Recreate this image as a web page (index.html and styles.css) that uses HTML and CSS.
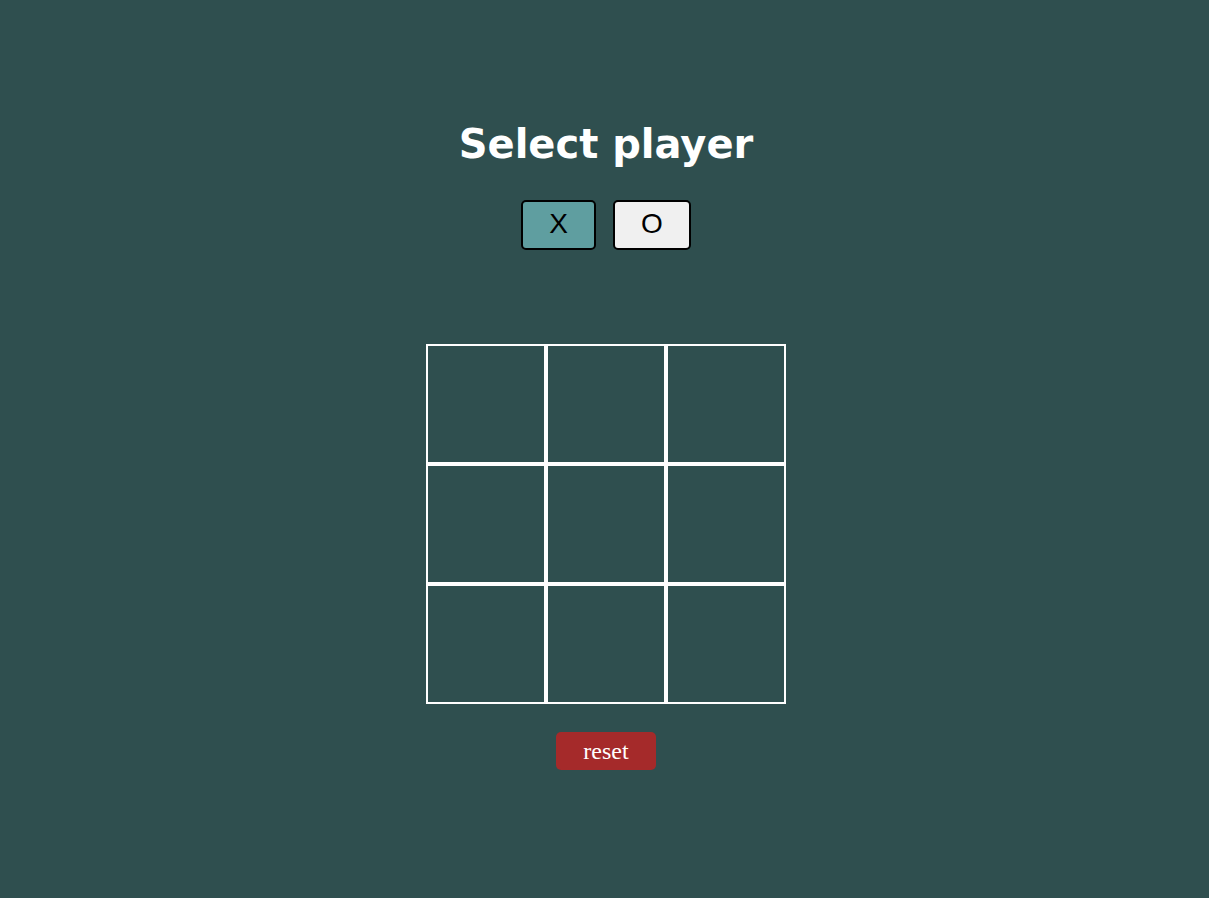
FILE: index.html
```html
<!DOCTYPE html>
<html>
<head>
<meta charset="utf-8">
<link rel="stylesheet" href="styles.css">
</head>
<body>
<main class="game">
  <h1 class="title">Select player</h1>
  <div class="players">
    <button class="player player-active">X</button>
    <button class="player">O</button>
  </div>
  <div class="board">
    <div class="cell"></div><div class="cell"></div><div class="cell"></div>
    <div class="cell"></div><div class="cell"></div><div class="cell"></div>
    <div class="cell"></div><div class="cell"></div><div class="cell"></div>
  </div>
  <button class="reset">reset</button>
</main>
</body>
</html>
```
FILE: styles.css
```css
html, body {
  margin: 0;
  padding: 0;
  background: #2f4f4f;
  height: 100%;
}
.game {
  display: flex;
  flex-direction: column;
  align-items: center;
  padding-top: 120px;
  padding-left: 3px;
}
.title {
  margin: 0;
  font-family: "DejaVu Sans", Verdana, sans-serif;
  font-weight: bold;
  font-size: 40px;
  line-height: 48px;
  color: #ffffff;
}
.players {
  display: flex;
  gap: 17px;
  margin-top: 32px;
}
.player {
  height: 50px;
  padding: 0 26px 2px;
  border: 2px solid #000;
  border-radius: 5px;
  background: #f0f0f0;
  color: #000;
  font-family: "Liberation Sans", Arial, sans-serif;
  font-size: 28px;
  line-height: 1;
}
.player-active {
  background: #5f9ea0;
}
.board {
  display: grid;
  grid-template-columns: repeat(3, 120px);
  grid-template-rows: repeat(3, 120px);
  margin-top: 94px;
}
.cell {
  box-sizing: border-box;
  border: 2px solid #ffffff;
}
.reset {
  margin-top: 28px;
  height: 38px;
  padding: 0 27px;
  border: none;
  border-radius: 5px;
  background: #a52a2a;
  color: #ffffff;
  font-family: "Liberation Serif", "Times New Roman", serif;
  font-size: 24px;
}
```
